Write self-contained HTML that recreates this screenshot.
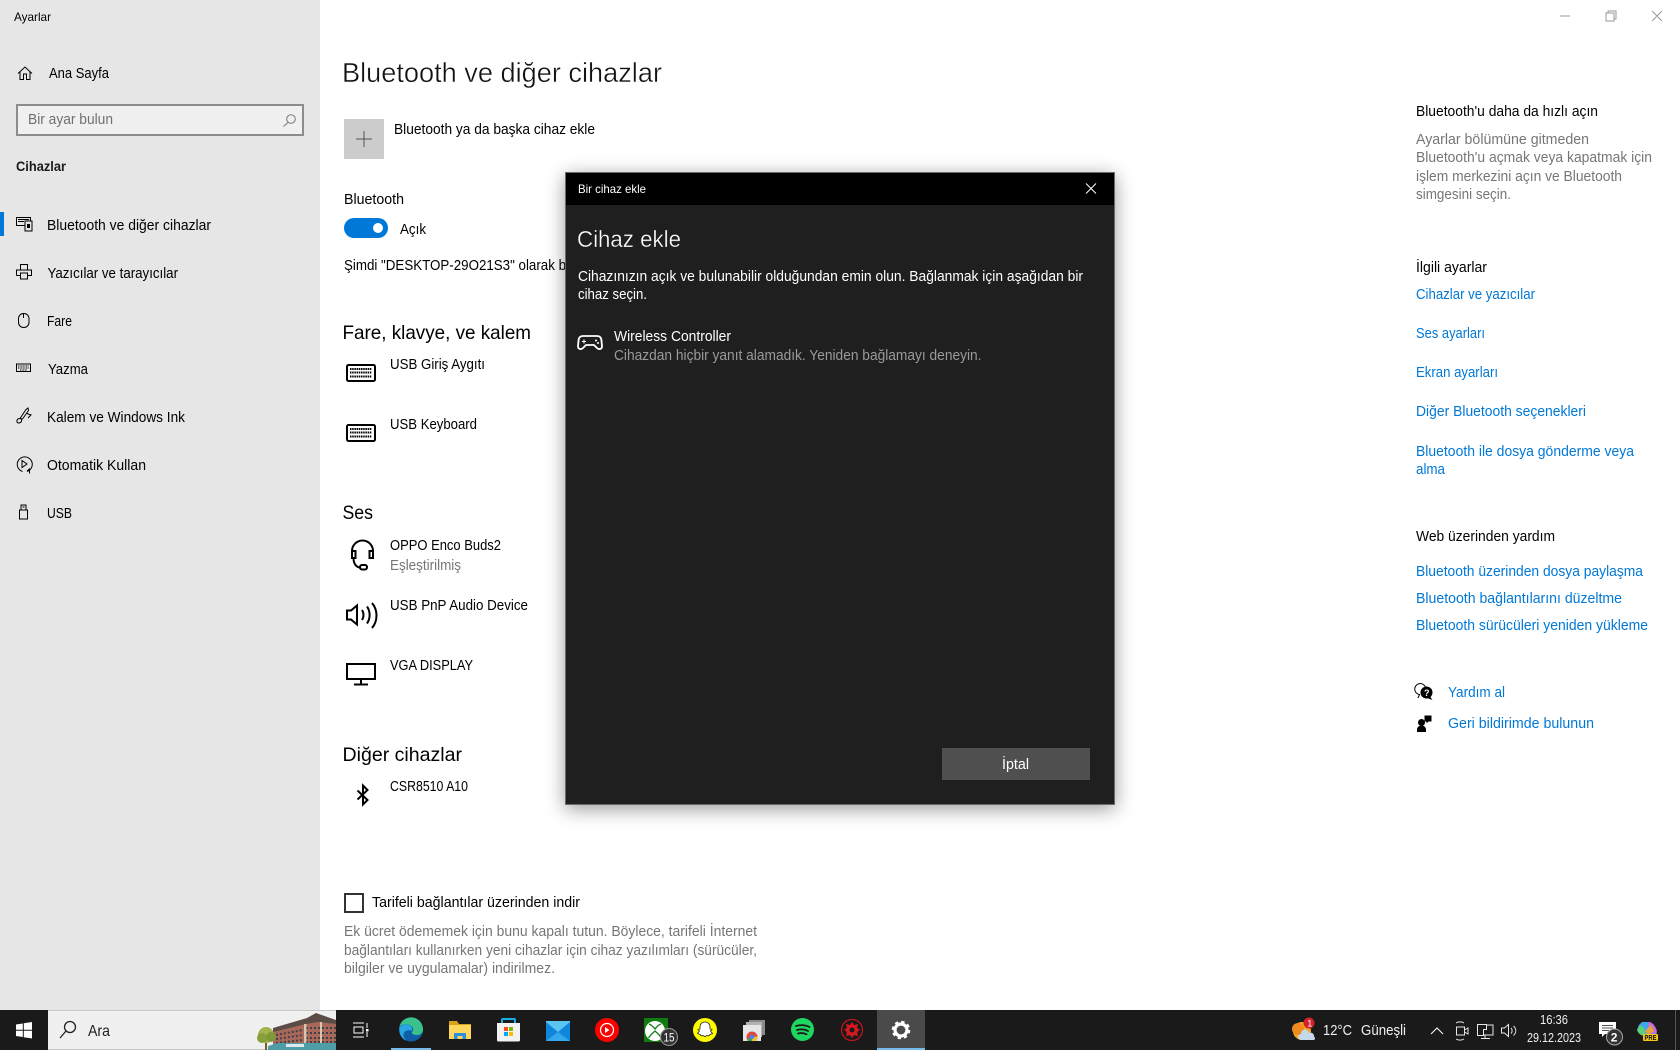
<!DOCTYPE html>
<html lang="tr"><head><meta charset="utf-8"><title>Ayarlar</title>
<style>
html,body{margin:0;padding:0;width:1680px;height:1050px;overflow:hidden;background:#fff}
body{position:relative;font-family:"Liberation Sans",sans-serif}
svg{position:absolute;left:0;top:0;display:block}
text{font-family:"Liberation Sans",sans-serif;font-size:14.5px;fill:#000}
.g{fill:#767676}.l{fill:#0078d7}.w{fill:#fff}.ic{fill:none;stroke:#000;stroke-width:1}
.h2{font-size:19.5px}.h1{font-size:27.5px;fill:#111;stroke:#fff;stroke-width:.4px}
.s{font-size:12px}
#side{position:absolute;left:0;top:0;width:320px;height:1010px;background:#e6e6e6}
#dlg{position:absolute;left:565px;top:172px;width:548px;height:631px;background:#1f1f1f;border:1px solid #6a6a6a;box-shadow:0 4px 18px rgba(0,0,0,.4)}
#bar{position:absolute;left:0;top:0;width:100%;height:32px;background:#000}
#btn{position:absolute;left:376px;top:575px;width:148px;height:32px;background:#4f4f4f}
#task{position:absolute;left:0;top:1010px;width:1680px;height:40px;background:#1a1a1a}
#sb{position:absolute;left:48px;top:0;width:288px;height:38px;background:#f0f0f0;border-top:1px solid #c6c6c6;border-bottom:1px solid #c6c6c6}
#act{position:absolute;left:877px;top:0;width:48px;height:40px;background:#4a4a4a}
.ul{position:absolute;top:38px;height:2px;background:#76b9ed}
</style></head><body>
<div id="side"></div>
<svg width="1680" height="1050" viewBox="0 0 1680 1050">
<!-- sidebar -->
<text class="s" x="14" y="21" textLength="37" lengthAdjust="spacingAndGlyphs">Ayarlar</text>
<path class="ic" transform="translate(0 5)" d="M18 68.500L25 62l7 6.500M20 67v7.500h3.500V69h3v5.500H30V67"/>
<text x="49" y="78" textLength="60" lengthAdjust="spacingAndGlyphs">Ana Sayfa</text>
<rect x="17" y="105" width="286" height="30" fill="#f0f0f0" stroke="#8c8c8c" stroke-width="2"/>
<text x="28" y="124" textLength="85" lengthAdjust="spacingAndGlyphs" style="fill:#707070">Bir ayar bulun</text>
<g transform="translate(0 8)"><circle cx="291" cy="111" r="4.300" fill="none" stroke="#777"/><path d="M288 114.500L283.500 118.500" stroke="#777" fill="none"/></g>
<text x="16" y="171" textLength="50" lengthAdjust="spacingAndGlyphs" style="font-weight:bold;font-size:14px;fill:#1a1a1a">Cihazlar</text>
<rect x="0" y="212" width="4" height="24" fill="#0078d7"/>
<g transform="translate(0 15)"><path class="ic" d="M16.500 202.500h14v8h-14zM18 204.500h11M18 206.500h6"/><rect x="25" y="206" width="7" height="10" fill="#e6e6e6" stroke="#000"/><rect x="27" y="209" width="3" height="4" fill="#000"/></g>
<text x="47" y="230" textLength="164" lengthAdjust="spacingAndGlyphs">Bluetooth ve diğer cihazlar</text>
<path class="ic" transform="translate(0 18)" d="M20.500 252v-5.500h7V252M16.500 257.500V252h15v5.500h-4M20.500 257.500h-4M20.500 255h7v6h-7z"/>
<text x="47.500" y="278" textLength="130.500" lengthAdjust="spacingAndGlyphs">Yazıcılar ve tarayıcılar</text>
<g transform="translate(0 21)"><rect x="18.500" y="292.500" width="10.500" height="14" rx="5" class="ic"/><path class="ic" d="M23.500 293v4"/></g>
<text x="47" y="326" textLength="25" lengthAdjust="spacingAndGlyphs">Fare</text>
<g transform="translate(0 24.500)"><rect x="16.500" y="339.500" width="14" height="7.500" class="ic"/><path d="M18 341.500h11M18 343.500h11M20 345.500h7" stroke="#000" stroke-dasharray="1 .6" fill="none"/></g>
<text x="48" y="374" textLength="40" lengthAdjust="spacingAndGlyphs">Yazma</text>
<path class="ic" transform="translate(0 27.500)" d="M20 391l6-9 2-1.500 .5 2.500-6 8.500zM27 386l4 1.500-3 3M20 391c-4 0-4 5-1 4.500s3-3 2-4.500"/>
<text x="47" y="422" textLength="138" lengthAdjust="spacingAndGlyphs">Kalem ve Windows Ink</text>
<path class="ic" transform="translate(0 31)" d="M27 440.500a7.500 7.500 0 1 0-4.500 0M27 440l2.500-2v4.500M22 429.500v7l5-3.500z"/>
<text x="47" y="470" textLength="99" lengthAdjust="spacingAndGlyphs">Otomatik Kullan</text>
<path class="ic" transform="translate(0 34)" d="M19.500 476h8v9h-8zM21 476v-5h5v5M22.500 473h2"/>
<text x="47" y="518" textLength="25" lengthAdjust="spacingAndGlyphs">USB</text>

<!-- main -->
<text class="h1" x="342" y="82" textLength="320" lengthAdjust="spacingAndGlyphs">Bluetooth ve diğer cihazlar</text>
<rect x="344" y="119" width="40" height="40" fill="#cccccc"/><path d="M356 139h16M364 131v16" stroke="#555" fill="none"/>
<text x="394" y="134" textLength="201" lengthAdjust="spacingAndGlyphs">Bluetooth ya da başka cihaz ekle</text>
<text x="344" y="204" textLength="60" lengthAdjust="spacingAndGlyphs">Bluetooth</text>
<rect x="344" y="218" width="44" height="20" rx="10" fill="#0078d7"/><circle cx="378" cy="228" r="5" fill="#fff"/>
<text x="400" y="234" textLength="26" lengthAdjust="spacingAndGlyphs">Açık</text>
<text x="344" y="270" textLength="222" lengthAdjust="spacingAndGlyphs">Şimdi "DESKTOP-29O21S3" olarak b</text>

<text class="h2" x="342.500" y="339" textLength="188.500" lengthAdjust="spacingAndGlyphs">Fare, klavye, ve kalem</text>
<g><rect x="347" y="365" width="28" height="16" rx="1.500" fill="none" stroke="#000" stroke-width="2"/><path d="M350 369h22M350 372.500h22M350 376.500h22" stroke="#000" stroke-width="2" stroke-dasharray="1.500 .7" fill="none"/></g>
<text x="390" y="369" textLength="95" lengthAdjust="spacingAndGlyphs">USB Giriş Aygıtı</text>
<g transform="translate(0 60)"><rect x="347" y="365" width="28" height="16" rx="1.500" fill="none" stroke="#000" stroke-width="2"/><path d="M350 369h22M350 372.500h22M350 376.500h22" stroke="#000" stroke-width="2" stroke-dasharray="1.500 .7" fill="none"/></g>
<text x="390" y="429" textLength="87" lengthAdjust="spacingAndGlyphs">USB Keyboard</text>

<text class="h2" x="342.500" y="519" textLength="30.500" lengthAdjust="spacingAndGlyphs">Ses</text>
<path d="M352 558v-7a10.500 10.500 0 0 1 21 0v7M352 551h3.500v7H352zM369.500 551h3.500v7h-3.500zM353.500 558c0 6 3 9.500 7 9.500" fill="none" stroke="#000" stroke-width="2"/><rect x="360" y="565" width="7" height="4.500" rx="2" fill="none" stroke="#000" stroke-width="2"/>
<text x="390" y="550" textLength="111" lengthAdjust="spacingAndGlyphs">OPPO Enco Buds2</text>
<text class="g" x="390" y="570" textLength="71" lengthAdjust="spacingAndGlyphs">Eşleştirilmiş</text>
<path d="M347 610.500v9h4l6 5v-19l-6 5zM362 610c2 3 2 7 0 10M367 606.500c3.500 5 3.500 12 0 17M372 603c6 7 6 18 0 25" fill="none" stroke="#000" stroke-width="2"/>
<text x="390" y="610" textLength="138" lengthAdjust="spacingAndGlyphs">USB PnP Audio Device</text>
<path d="M347 664h28v15h-28zM361 679v5M354 684.500h14" fill="none" stroke="#000" stroke-width="2"/>
<text x="390" y="670" textLength="83" lengthAdjust="spacingAndGlyphs">VGA DISPLAY</text>

<text class="h2" x="342.500" y="761" textLength="119.500" lengthAdjust="spacingAndGlyphs">Diğer cihazlar</text>
<path d="M357.500 790.500l10 9.500-4.500 4.500v-19l4.500 4.500-10 9.500" fill="none" stroke="#000" stroke-width="2"/>
<text x="390" y="791" textLength="78" lengthAdjust="spacingAndGlyphs">CSR8510 A10</text>

<rect x="345" y="894" width="18" height="18" fill="none" stroke="#333" stroke-width="2"/>
<text x="372" y="907" textLength="208" lengthAdjust="spacingAndGlyphs">Tarifeli bağlantılar üzerinden indir</text>
<text class="g" x="344" y="936" textLength="413" lengthAdjust="spacingAndGlyphs">Ek ücret ödememek için bunu kapalı tutun. Böylece, tarifeli İnternet</text>
<text class="g" x="344" y="955" textLength="413" lengthAdjust="spacingAndGlyphs">bağlantıları kullanırken yeni cihazlar için cihaz yazılımları (sürücüler,</text>
<text class="g" x="344" y="973" textLength="211" lengthAdjust="spacingAndGlyphs">bilgiler ve uygulamalar) indirilmez.</text>

<!-- window controls -->
<path d="M1560 16h10M1606 13h8v8h-8zM1608 13v-2h8v8h-2M1652 11l10 10M1662 11l-10 10" fill="none" stroke="#999"/>

<!-- right -->
<text x="1416" y="116" textLength="182" lengthAdjust="spacingAndGlyphs">Bluetooth'u daha da hızlı açın</text>
<text class="g" x="1416" y="144" textLength="173" lengthAdjust="spacingAndGlyphs">Ayarlar bölümüne gitmeden</text>
<text class="g" x="1416" y="162" textLength="236" lengthAdjust="spacingAndGlyphs">Bluetooth'u açmak veya kapatmak için</text>
<text class="g" x="1416" y="181" textLength="206" lengthAdjust="spacingAndGlyphs">işlem merkezini açın ve Bluetooth</text>
<text class="g" x="1416" y="199" textLength="95" lengthAdjust="spacingAndGlyphs">simgesini seçin.</text>
<text x="1416" y="272" textLength="71" lengthAdjust="spacingAndGlyphs">İlgili ayarlar</text>
<text class="l" x="1416" y="299" textLength="119" lengthAdjust="spacingAndGlyphs">Cihazlar ve yazıcılar</text>
<text class="l" x="1416" y="338" textLength="69" lengthAdjust="spacingAndGlyphs">Ses ayarları</text>
<text class="l" x="1416" y="377" textLength="82" lengthAdjust="spacingAndGlyphs">Ekran ayarları</text>
<text class="l" x="1416" y="416" textLength="170" lengthAdjust="spacingAndGlyphs">Diğer Bluetooth seçenekleri</text>
<text class="l" x="1416" y="456" textLength="218" lengthAdjust="spacingAndGlyphs">Bluetooth ile dosya gönderme veya</text>
<text class="l" x="1416" y="474" textLength="29" lengthAdjust="spacingAndGlyphs">alma</text>
<text x="1416" y="541" textLength="139" lengthAdjust="spacingAndGlyphs">Web üzerinden yardım</text>
<text class="l" x="1416" y="576" textLength="227" lengthAdjust="spacingAndGlyphs">Bluetooth üzerinden dosya paylaşma</text>
<text class="l" x="1416" y="603" textLength="206" lengthAdjust="spacingAndGlyphs">Bluetooth bağlantılarını düzeltme</text>
<text class="l" x="1416" y="630" textLength="232" lengthAdjust="spacingAndGlyphs">Bluetooth sürücüleri yeniden yükleme</text>
<path d="M1418 698l1.500-3.500a5.500 5.500 0 1 1 4-1" fill="none" stroke="#000"/>
<circle cx="1426.500" cy="692.500" r="6" fill="#000"/><path d="M1430 696.500l2.500 3.500-5.500-2z" fill="#000"/>
<text x="1424" y="696" style="font-size:9px;font-weight:bold;fill:#fff">?</text>
<text class="l" x="1448" y="697" textLength="57" lengthAdjust="spacingAndGlyphs">Yardım al</text>
<circle cx="1421.500" cy="722.500" r="3.500" fill="#000"/><path d="M1417 732v-2.500a4.500 4 0 0 1 9 0v2.500z" fill="#000"/><path d="M1424.500 715.500h7v6h-3l-2 2v-2h-2z" fill="#000"/>
<text class="l" x="1448" y="728" textLength="146" lengthAdjust="spacingAndGlyphs">Geri bildirimde bulunun</text>
</svg>

<div id="dlg"><div id="bar"></div><div id="btn"></div></div>

<div id="task"><div id="sb"></div><div id="act"></div>
<div class="ul" style="left:391px;width:40px"></div><div class="ul" style="left:877px;width:48px"></div></div>

<svg width="1680" height="1050" viewBox="0 0 1680 1050">
<!-- dialog -->
<text class="s w" x="578" y="193" textLength="68" lengthAdjust="spacingAndGlyphs">Bir cihaz ekle</text>
<path d="M1086 183.500l10 10M1096 183.500l-10 10" stroke="#fff" fill="none"/>
<text x="577" y="247" textLength="104" lengthAdjust="spacingAndGlyphs" style="font-size:23.500px;fill:#fff;stroke:#1f1f1f;stroke-width:.35px">Cihaz ekle</text>
<text class="w" x="578" y="281" textLength="505" lengthAdjust="spacingAndGlyphs">Cihazınızın açık ve bulunabilir olduğundan emin olun. Bağlanmak için aşağıdan bir</text>
<text class="w" x="578" y="299" textLength="69" lengthAdjust="spacingAndGlyphs">cihaz seçin.</text>
<path d="M583 336h14c3 0 4.500 2 4.500 5l.5 5c.3 3-3 4-5 2l-3-3h-8l-3 3c-2 2-5.300 1-5-2l.5-5c0-3 1.500-5 4.500-5z" fill="none" stroke="#fff" stroke-width="1.800"/>
<path d="M584 339.500v4M582 341.500h4" stroke="#fff" fill="none"/><circle cx="596" cy="340.500" r="1" fill="#fff"/><circle cx="598" cy="343" r="1" fill="#fff"/>
<text class="w" x="614" y="341" textLength="117" lengthAdjust="spacingAndGlyphs">Wireless Controller</text>
<text x="614" y="360" textLength="367.500" lengthAdjust="spacingAndGlyphs" style="fill:#9a9a9a">Cihazdan hiçbir yanıt alamadık. Yeniden bağlamayı deneyin.</text>
<text class="w" x="1002" y="769" textLength="27" lengthAdjust="spacingAndGlyphs">İptal</text>

<!-- taskbar: left -->
<path d="M16 1024.500l6.800-1v6.300H16zM23.800 1023.300l8.200-1.300v7.800h-8.200zM16 1030.800h6.800v6.200l-6.800-1zM23.800 1030.800H32v7.700l-8.200-1.200z" fill="#fff"/>
<circle cx="70" cy="1027" r="5.500" fill="none" stroke="#222" stroke-width="1.300"/><path d="M66 1031l-6 7" stroke="#222" stroke-width="1.300" fill="none"/>
<text x="88" y="1036" textLength="22" lengthAdjust="spacingAndGlyphs" style="font-size:16px;fill:#222">Ara</text>
<!-- hotel image -->
<path d="M273 1028l34-10 9-5 20 7v28h-63z" fill="#5b4d46"/>
<path d="M273 1032l33-8 12-2 18 2v23h-63z" fill="#a8695a"/>
<path d="M276 1035l27-5M276 1039l27-4M276 1043l27-3M306 1028h30M306 1033h30M306 1038h30M306 1042h30" stroke="#3f3f48" stroke-width="2" stroke-dasharray="2 2" fill="none"/>
<path d="M304 1024h2.500v23H304zM320 1022h2v25h-2z" fill="#d8c4b0"/>
<path d="M268 1046l10-3h58v7h-68z" fill="#4e9ea8"/>
<path d="M286 1044h18v3h-18z" fill="#dfe7ef"/>
<path d="M265 1038h2v12h-2z" fill="#7a5a30"/>
<circle cx="266" cy="1035" r="8" fill="#a3b24c"/><circle cx="262" cy="1038" r="5" fill="#8a9e3a"/><circle cx="271" cy="1037" r="5" fill="#7d9938"/>
<!-- task view -->
<path d="M353 1023h11M353 1037h11M354 1027h9v6h-9zM367 1023v5M367 1032v5" stroke="#fff" fill="none"/><rect x="366" y="1029" width="2.500" height="2.500" fill="#fff"/>
<!-- edge -->
<circle cx="411" cy="1029.500" r="12" fill="#0f5ea8"/>
<path d="M399.500 1026a12 12 0 0 1 23.500 4c0 3-3 5-6 5-3 0-6-1-5-3 1-1 2-3 0-5-3-4-9-3-12.500-1z" fill="#3bc28c"/>
<path d="M399.500 1027c3-3 9-4 12 0 1 2 .5 3 0 4-4-2-8 0-8 4 0 2 1 4 3 5.500-4-1-8-6-7-13.500z" fill="#28a6e0"/>
<!-- folder -->
<path d="M449 1021h8l2 3h12v15h-22z" fill="#d9a21b"/><path d="M449 1025h22v14h-22z" fill="#ffd75f"/><path d="M454 1039v-6h12v6h-3.500v-3h-5v3z" fill="#2f8fd8"/>
<!-- store -->
<path d="M502 1023v-3a1 1 0 0 1 1-1h11a1 1 0 0 1 1 1v3" fill="none" stroke="#18b0e8" stroke-width="2"/>
<path d="M497 1023h23v17a1.500 1.500 0 0 1-1.500 1.500h-20a1.500 1.500 0 0 1-1.500-1.500z" fill="#f2f2f2"/>
<rect x="504" y="1027" width="4" height="4" fill="#f25022"/><rect x="509" y="1027" width="4" height="4" fill="#7fba00"/><rect x="504" y="1032" width="4" height="4" fill="#00a4ef"/><rect x="509" y="1032" width="4" height="4" fill="#ffb900"/>
<!-- mail -->
<path d="M546 1021h24v20h-24z" fill="#0f86dc"/><path d="M546 1022l12 10 12-10v-1h-24z" fill="#5cc4f2"/><path d="M546 1041l12-9 12 9z" fill="#35a7ec"/>
<!-- yt music -->
<circle cx="607" cy="1030" r="12" fill="#f00"/><circle cx="607" cy="1030" r="6.500" fill="none" stroke="#fff" stroke-width="1.200"/><path d="M605 1027v6l4.500-3z" fill="#fff"/>
<!-- xbox -->
<rect x="644" y="1018" width="24" height="24" fill="#107c10"/><circle cx="655" cy="1031" r="10" fill="#fff"/><path d="M649 1024c3 1 4.500 3 6 5 1.500-2 3-4 6-5M648.500 1038c2-3 4-5 6.500-7 2.500 2 4.500 4 6.500 7" fill="none" stroke="#107c10" stroke-width="1.300"/>
<circle cx="669" cy="1037" r="8.500" fill="#333" stroke="#999"/><text x="663.500" y="1041.500" textLength="11" lengthAdjust="spacingAndGlyphs" style="font-size:12px;fill:#fff">15</text>
<!-- snapchat -->
<circle cx="705" cy="1030" r="12" fill="#fffc00"/>
<path d="M705 1022c3.500 0 5 2.500 5 5v2l2 .5-1.500 1.500 2 2.500-2.500 1-1 1.200-2.500 0-1.500 1-1.500-1-2.500 0-1-1.200-2.500-1 2-2.500-1.500-1.500 2-.5v-2c0-2.500 1.500-5 5-5z" fill="#fff" stroke="#222" stroke-width=".8"/>
<!-- chrome apps -->
<rect x="749" y="1020" width="16" height="15" fill="#8a8a8a"/><rect x="746" y="1022" width="16" height="15" fill="#b3b3b3"/><rect x="743" y="1025" width="18" height="16" fill="#e6e6e6"/>
<circle cx="752" cy="1037" r="5.500" fill="#dd4b3e"/><path d="M752 1037l-5 2.500a5.500 5.500 0 0 0 5 3z" fill="#3aa757"/><path d="M752 1037v5.500a5.500 5.500 0 0 0 5.400-6z" fill="#fbc02d"/><circle cx="752" cy="1037" r="2.200" fill="#4285f4"/><rect x="743" y="1041" width="18" height="3" fill="#1a1a1a"/>
<!-- spotify -->
<circle cx="802.500" cy="1029.500" r="11.500" fill="#1ed760"/><path d="M796 1026c4.500-1.300 9.500-1 13.500 1M797 1030c4-1 8-.7 11 1M798 1033.500c3-.8 6-.5 8.500 .8" fill="none" stroke="#1a1a1a" stroke-width="1.800" stroke-linecap="round"/>
<!-- red -->
<circle cx="852" cy="1030" r="10.500" fill="#1a1a1a" stroke="#c8141c" stroke-width="1.200"/><path d="M852 1022l2 3 4-1-1 4 3 2-3 2 1 4-4-1-2 3-2-3-4 1 1-4-3-2 3-2-1-4 4 1z" fill="#d8171f"/><circle cx="852" cy="1030" r="2.500" fill="#1a1a1a"/>
<!-- gear -->
<circle cx="901" cy="1030" r="6" fill="none" stroke="#fff" stroke-width="3.200"/><circle cx="901" cy="1030" r="8.200" fill="none" stroke="#fff" stroke-width="2.200" stroke-dasharray="3.300 3.140"/>

<!-- tray -->
<circle cx="1302" cy="1031" r="9" fill="#f5a623"/><circle cx="1298" cy="1029" r="6" fill="#f08a1c"/>
<path d="M1301 1040a3 3 0 0 1 0-6 4 4 0 0 1 8-1 3.500 3.500 0 0 1 5 3.500 2 2 0 0 1 0 3.500z" fill="#c5d7ea"/>
<circle cx="1309" cy="1023" r="5.500" fill="#d3232a"/><text x="1307.300" y="1026.300" style="font-size:9px;fill:#fff">1</text>
<text x="1323" y="1035" textLength="29" lengthAdjust="spacingAndGlyphs" style="font-size:14.500px;fill:#f0f0f0">12°C</text>
<text x="1361" y="1035" textLength="45" lengthAdjust="spacingAndGlyphs" style="font-size:14.500px;fill:#f0f0f0">Güneşli</text>
<path d="M1431 1034l6-6 6 6" fill="none" stroke="#fff"/>
<path d="M1456.500 1027h8v8h-8zM1464.500 1030l3.500-2v6l-3.500-2zM1456 1023c2-1.500 6-1.500 8 0M1456 1039c2 1.500 6 1.500 8 0" fill="none" stroke="#e8e8e8"/>
<path d="M1477.500 1024.500h9v5h-3v6h-6zM1486.500 1025h6.500v10h-9.500M1485 1035v3M1481 1038.500h9" fill="none" stroke="#e8e8e8"/>
<path d="M1501.500 1028h3l4-3.500v12l-4-3.500h-3zM1511 1028c1.500 1.500 1.500 4 0 5.500M1513.500 1026c3 3 3 6.500 0 9.500" fill="none" stroke="#e8e8e8"/>
<text x="1540" y="1024" textLength="28" lengthAdjust="spacingAndGlyphs" style="font-size:13px;fill:#f0f0f0">16:36</text>
<text x="1527" y="1042" textLength="54" lengthAdjust="spacingAndGlyphs" style="font-size:13px;fill:#f0f0f0">29.12.2023</text>
<path d="M1599 1022h17v12h-11l-3 3v-3h-3z" fill="#fff"/><path d="M1602 1025.500h11M1602 1028h11M1602 1030.500h7" stroke="#555" fill="none"/>
<circle cx="1614.500" cy="1037" r="8" fill="#333" stroke="#aaa"/><text x="1610.800" y="1041.300" style="font-size:12px;font-weight:bold;fill:#fff">2</text>
<path d="M1642 1022h8l4 3 3 8-6 5-8-3-6-5 2-5z" fill="#3fa6e8"/><path d="M1648 1022c4 0 7 3 9 9l-3 5-5-3z" fill="#c76bd6"/><path d="M1637 1030c2 5 5 6 9 6l-2-8-4-3z" fill="#5fd07a"/><path d="M1645 1031l6-6 3 6-6 4z" fill="#e9a23a"/>
<rect x="1643" y="1034" width="15" height="7" rx="1" fill="#f5c518"/><text x="1644.500" y="1040" textLength="12" lengthAdjust="spacingAndGlyphs" style="font-size:7px;font-weight:bold;fill:#111">PRE</text>
<path d="M1675.500 1010v40" stroke="#555" fill="none"/>
</svg>
</body></html>
